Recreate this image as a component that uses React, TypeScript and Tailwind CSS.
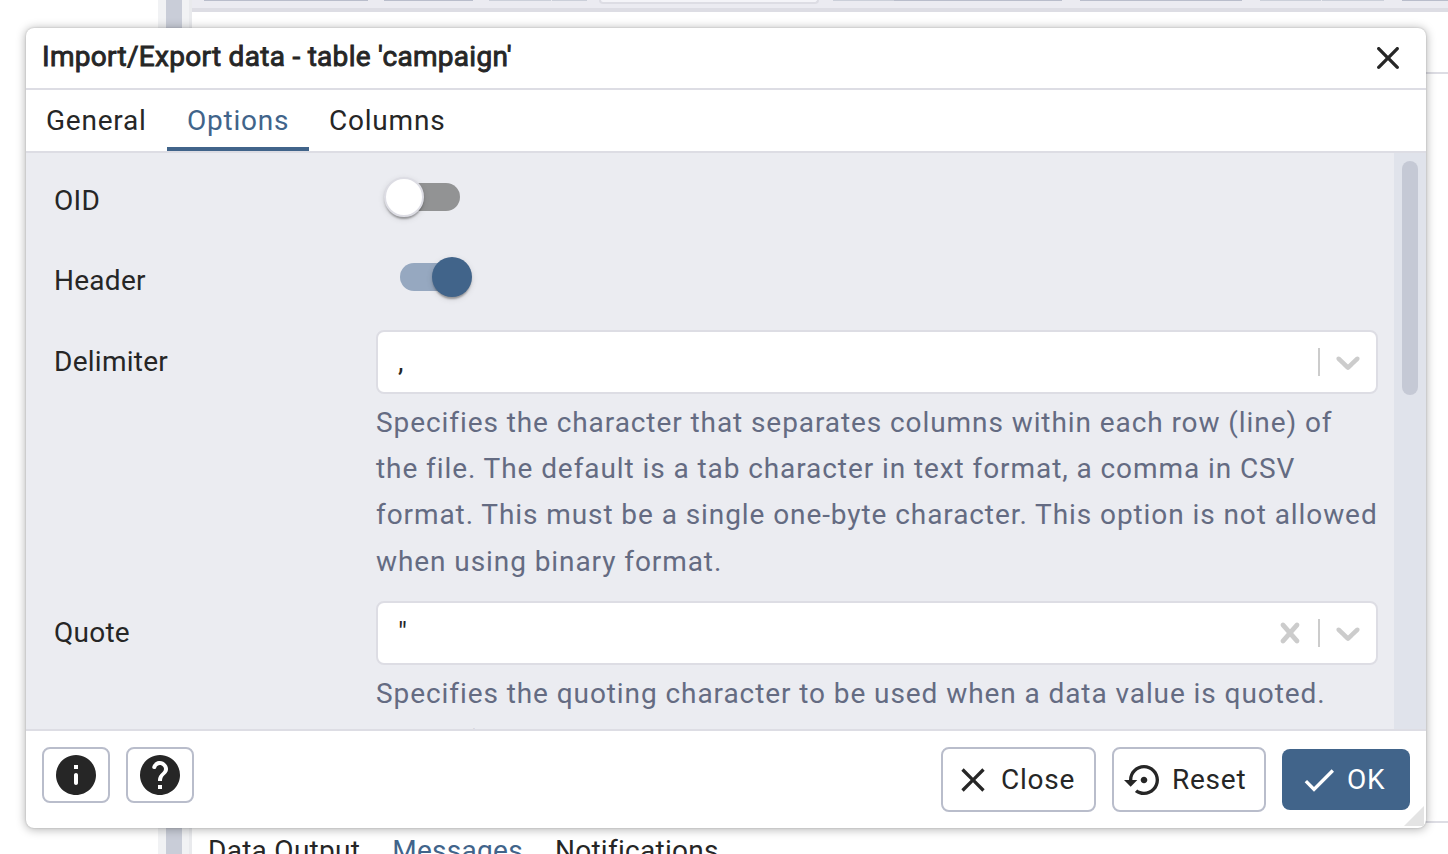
import type { ReactNode } from "react";

const INFO =
  "M12 2C6.48 2 2 6.48 2 12s4.48 10 10 10 10-4.48 10-10S17.52 2 12 2zm0 15c-.55 0-1-.45-1-1v-4c0-.55.45-1 1-1s1 .45 1 1v4c0 .55-.45 1-1 1zm1-8h-2V7h2v2z";
const HELP =
  "M12 2C6.48 2 2 6.48 2 12s4.48 10 10 10 10-4.48 10-10S17.52 2 12 2zm1 17h-2v-2h2v2zm2.07-7.75l-.9.92c-.5.51-.86.97-1.04 1.69-.08.32-.13.68-.13 1.14h-2v-.5c0-.46.08-.9.22-1.31.2-.58.53-1.1.95-1.52l1.24-1.26c.46-.44.68-1.1.55-1.8-.13-.72-.69-1.33-1.39-1.53-1.11-.31-2.14.32-2.47 1.27-.12.37-.43.65-.82.65h-.3C8.4 9 8 8.44 8.16 7.88c.43-1.47 1.68-2.59 3.23-2.83 1.52-.24 2.97.55 3.87 1.8 1.18 1.63.83 3.38-.19 4.4z";
const CLOSE_ROUND =
  "M18.3 5.71c-.39-.39-1.02-.39-1.41 0L12 10.59 7.11 5.7c-.39-.39-1.02-.39-1.41 0-.39.39-.39 1.02 0 1.41L10.59 12 5.7 16.89c-.39.39-.39 1.02 0 1.41.39.39 1.02.39 1.41 0L12 13.41l4.89 4.89c.39.39 1.02.39 1.41 0 .39-.39.39-1.02 0-1.41L13.41 12l4.89-4.89c.38-.38.38-1.02 0-1.4z";
const CLOSE =
  "M19 6.41L17.59 5 12 10.59 6.41 5 5 6.41 10.59 12 5 17.59 6.41 19 12 13.41 17.59 19 19 17.59 13.41 12z";
const RESTORE =
  "M14 12c0-1.1-.9-2-2-2s-2 .9-2 2 .9 2 2 2 2-.9 2-2zm-2-9c-4.97 0-9 4.03-9 9H0l4 4 4-4H5c0-3.87 3.13-7 7-7s7 3.13 7 7-3.13 7-7 7c-1.51 0-2.91-.49-4.06-1.3l-1.42 1.44C8.04 20.3 9.94 21 12 21c4.97 0 9-4.03 9-9s-4.03-9-9-9z";
const CHECK = "M9 16.17L4.83 12l-1.42 1.41L9 19 21 7l-1.41-1.41z";
const CHEVRON =
  "M4.516 7.548c0.436-0.446 1.043-0.481 1.576 0l3.908 3.747 3.908-3.747c0.533-0.481 1.141-0.446 1.574 0 0.436 0.445 0.408 1.197 0 1.615-0.406 0.418-4.695 4.502-4.695 4.502-0.217 0.223-0.502 0.335-0.787 0.335s-0.57-0.112-0.789-0.335c0 0-4.287-4.084-4.695-4.502s-0.436-1.17 0-1.615z";
const CLEAR =
  "M14.348 14.849c-0.469 0.469-1.229 0.469-1.697 0l-2.651-3.030-2.651 3.029c-0.469 0.469-1.229 0.469-1.697 0-0.469-0.469-0.469-1.229 0-1.697l2.758-3.15-2.759-3.152c-0.469-0.469-0.469-1.228 0-1.697s1.228-0.469 1.697 0l2.652 3.031 2.651-3.031c0.469-0.469 1.228-0.469 1.697 0s0.469 1.229 0 1.697l-2.758 3.152 2.758 3.15c0.469 0.469 0.469 1.229 0 1.698z";

function Icon({ d, box = 24, className }: { d: string; box?: number; className: string }) {
  return (
    <svg viewBox={`0 0 ${box} ${box}`} fill="currentColor" className={`shrink-0 ${className}`}>
      <path d={d} />
    </svg>
  );
}

function Backdrop() {
  return (
    <div className="flex h-full">
      <div className="w-[158px] shrink-0 bg-white" />
      <div className="w-2 shrink-0 bg-[#f1f2f4]" />
      <div className="w-4 shrink-0 bg-[#c9cdd8]" />
      <div className="w-[7px] shrink-0 bg-[#f1f2f4]" />
      <div className="w-[3px] shrink-0 bg-[#e9eaed]" />
      <div className="flex min-w-0 grow flex-col">
        <div className="flex h-3 shrink-0 items-start border-b-4 border-[#dddde4] bg-[#ebebf1] pl-3">
          <div className="h-px w-[164px] bg-[#b9bdcb]" />
          <div className="ml-4 h-px w-[89px] bg-[#b9bdcb]" />
          <div className="ml-4 h-px w-[62px] bg-[#cbcfd9]" />
          <div className="ml-px h-px w-[35px] bg-[#cbcfd9]" />
          <div className="ml-3 h-1 w-[220px] shrink-0 rounded-b-md border-2 border-t-0 border-[#dddde4] bg-[#f4f4f8]" />
          <div className="ml-3.5 h-px w-[61px] bg-[#cbcfd9]" />
          <div className="h-px w-[168px] bg-[#b9bdcb]" />
          <div className="ml-[18px] h-px w-[162px] bg-[#b9bdcb]" />
          <div className="ml-[18px] h-px w-[61px] bg-[#cbcfd9]" />
          <div className="ml-px h-px w-[62px] bg-[#cbcfd9]" />
          <div className="ml-[18px] h-px grow bg-[#b9bdcb]" />
        </div>
        <div className="h-[62px] shrink-0 border-b-2 border-[#dddde4]" />
        <div className="h-[749px] shrink-0 border-b-2 border-[#dddde4]" />
        <div className="flex gap-8 pt-2.5 pl-4 text-[28px] leading-[36px] tracking-[0.28px]">
          <span>Data Output</span>
          <span className="text-[#41648a]">Messages</span>
          <span>Notifications</span>
        </div>
      </div>
    </div>
  );
}

function Row({ label, className, children }: { label: string; className: string; children: ReactNode }) {
  return (
    <div className={`flex ${className}`}>
      <div className="w-[322px] shrink-0 text-[28px] leading-[40px] tracking-[0.26px]">{label}</div>
      {children}
    </div>
  );
}

function SelectRow({
  label,
  value,
  clearable = false,
  children,
}: {
  label: string;
  value: string;
  clearable?: boolean;
  children: ReactNode;
}) {
  return (
    <div className="flex h-[271px]">
      <div className="w-[322px] shrink-0 pt-3 text-[28px] leading-[40px] tracking-[0.26px]">{label}</div>
      <div className="w-[1002px]">
        <div className="flex h-16 items-center rounded-lg border-2 border-[#dddde4] bg-white pr-2 pl-5">
          <span className="grow text-[28px] leading-[32px]">{value}</span>
          {clearable && <Icon d={CLEAR} box={20} className="mr-2 size-10 text-[#cccccc]" />}
          <div className="mr-2 h-7 w-0.5 bg-[#cccccc]" />
          <Icon d={CHEVRON} box={20} className="size-10 text-[#cccccc]" />
        </div>
        <p className="mt-[5.7px] w-[1004px] text-[28px] leading-[46.33px] tracking-[0.92px] text-[#646b82]">
          {children}
        </p>
      </div>
    </div>
  );
}

export default function App() {
  return (
    <div className="relative h-[854px] w-[1448px] overflow-hidden bg-white font-[Roboto,sans-serif] text-[#262626]">
      <Backdrop />
      <div className="absolute top-7 left-[26px] flex h-[800px] w-[1400px] flex-col overflow-hidden rounded-lg bg-white shadow-[0_0_2px_0_rgba(0,0,0,0.2),0_1px_10px_1px_rgba(0,0,0,0.28)]">
        <header className="flex h-[62px] shrink-0 items-center justify-between border-b-2 border-[#dddde4] pr-[18px] pl-4">
          <h1 className="pb-0.5 text-[28px] leading-[36px] tracking-[0.29px] [-webkit-text-stroke:0.9px_#262626]">
            Import/Export data - table 'campaign'
          </h1>
          <Icon d={CLOSE_ROUND} className="size-10" />
        </header>
        <nav className="flex h-[63px] shrink-0 border-b-2 border-[#dddde4] text-[28px] leading-[61px] tracking-[0.78px]">
          <div className="w-[141px] pl-5">General</div>
          <div className="w-[142px] border-b-4 border-[#41648a] pl-5 text-[#41648a]">Options</div>
          <div className="pl-5">Columns</div>
        </nav>
        <main className="flex h-[576px] shrink-0 overflow-hidden bg-[#ebecf1]">
          <div className="w-[1368px] shrink-0 pl-7">
            <Row label="OID" className="h-20 pt-7">
              <div className="-mt-1 ml-2 flex h-10 w-[76px] items-center">
                <div className="z-10 size-10 rounded-full border-2 border-[#dddde4] bg-white shadow-[0_4px_2px_-2px_rgba(0,0,0,0.2),0_2px_2px_0_rgba(0,0,0,0.14),0_2px_6px_0_rgba(0,0,0,0.12)]" />
                <div className="-ml-8 h-7 w-[68px] rounded-full bg-[#929394]" />
              </div>
            </Row>
            <Row label="Header" className="h-[97px] pt-7">
              <div className="-mt-1 ml-6 flex h-10 w-[72px] items-center">
                <div className="h-7 w-[68px] shrink-0 rounded-full bg-[#96a8c0]" />
                <div className="z-10 -ml-9 size-10 shrink-0 rounded-full bg-[#41648a] shadow-[0_4px_2px_-2px_rgba(0,0,0,0.2),0_2px_2px_0_rgba(0,0,0,0.14),0_2px_6px_0_rgba(0,0,0,0.12)]" />
              </div>
            </Row>
            <SelectRow label="Delimiter" value=",">
              Specifies the character that separates columns within each row (line) of
              <br />
              the file. The default is a tab character in text format, a comma in CSV
              <br />
              format. This must be a single one-byte character. This option is not allowed
              <br />
              when using binary format.
            </SelectRow>
            <SelectRow label="Quote" value={'"'} clearable>
              Specifies the quoting character to be used when a data value is quoted.
              <span className="block pt-[1.3px]">The default is double-quote.</span>
            </SelectRow>
          </div>
          <div className="flex w-8 shrink-0 justify-center bg-[#e0e3eb] pt-2">
            <div className="h-[234px] w-4 rounded-full bg-[#c5c9d5]" />
          </div>
        </main>
        <footer className="flex grow items-start border-t-2 border-[#dddde4] px-4 pt-4 text-[28px] leading-[36px] tracking-[0.75px]">
          <button className="mr-4 flex h-14 w-[68px] items-center justify-center rounded-lg border-2 border-[#b9bdcb]">
            <Icon d={INFO} className="size-12" />
          </button>
          <button className="flex h-14 w-[68px] items-center justify-center rounded-lg border-2 border-[#b9bdcb]">
            <Icon d={HELP} className="size-12" />
          </button>
          <button className="ml-auto flex h-[65px] w-[155px] items-center rounded-lg border-2 border-[#b9bdcb] pl-[10px]">
            <Icon d={CLOSE} className="mr-2 size-10" />
            Close
          </button>
          <button className="ml-4 flex h-[65px] w-[154px] items-center rounded-lg border-2 border-[#b9bdcb] pl-[10px]">
            <Icon d={RESTORE} className="mr-2 size-10" />
            Reset
          </button>
          <button className="mt-0.5 ml-4 flex h-[61px] w-32 items-center rounded-lg bg-[#41648a] pl-[17px] text-white">
            <Icon d={CHECK} className="mr-2 size-10" />
            OK
          </button>
        </footer>
        <svg viewBox="0 0 20 20" className="absolute right-0.5 bottom-0.5 size-5 fill-[#e4e4e4]">
          <path d="M20 0V20H0z" />
        </svg>
      </div>
    </div>
  );
}
